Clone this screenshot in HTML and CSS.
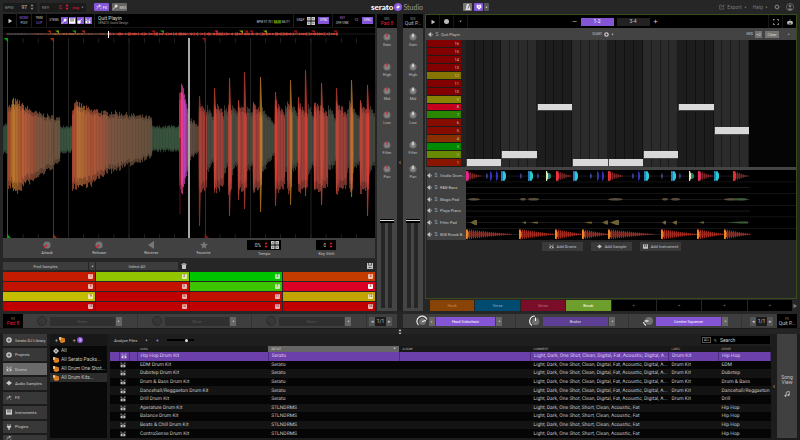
FILE: index.html
```html
<!DOCTYPE html>
<html lang="en">
<head>
<meta charset="utf-8">
<title>Serato Studio</title>
<link rel="stylesheet" href="styles.css">
</head>
<body>
<svg class="defs" aria-hidden="true">
  <symbol id="play" viewBox="0 0 8 8"><path d="M2 1l5 3-5 3z" fill="currentColor"/></symbol>
  <symbol id="back" viewBox="0 0 8 8"><path d="M7 0v8L1 4z" fill="currentColor"/></symbol>
  <symbol id="down" viewBox="0 0 8 8"><path d="M1 2h6L4 6z" fill="currentColor"/></symbol>
  <symbol id="updown" viewBox="0 0 8 8"><path d="M2 3l2-3 2 3zM2 5h4L4 8z" fill="currentColor"/></symbol>
  <symbol id="star" viewBox="0 0 10 10"><path d="M5 0l1.4 3.4 3.6.3-2.7 2.4.8 3.6L5 7.8 1.9 9.7l.8-3.6L0 3.700l3.600-.3z" fill="currentColor"/></symbol>
  <symbol id="grid" viewBox="0 0 8 8"><path d="M0 0h3.600v3.600H0zM4.400 0H8v3.600H4.400zM0 4.400h3.600V8H0zM4.400 4.400H8V8H4.400z" fill="currentColor"/><path d="M1 1.800h1.600M5.400 1.800H7M1 6.200h1.600M5.400 6.200H7" stroke="#222" stroke-width=".6"/></symbol>
  <symbol id="knob-red" viewBox="0 0 10 10"><circle cx="5" cy="5" r="4.500" fill="#707070"/><circle cx="5" cy="5" r="3" fill="#858585"/><path d="M5 .5V5" stroke="#e0102c" stroke-width="1.400"/></symbol>
  <symbol id="knob-white" viewBox="0 0 10 10"><circle cx="5" cy="5" r="4.500" fill="#6e6e6e"/><circle cx="5" cy="5" r="3" fill="#888"/><path d="M5 .5V5" stroke="#fff" stroke-width="1.400"/></symbol>
  <symbol id="knob-turn" viewBox="0 0 10 10"><circle cx="5" cy="5" r="4.500" fill="#757575"/><path d="M5 5L1.600 8" stroke="#e0102c" stroke-width="1.600"/></symbol>
  <symbol id="knob-off" viewBox="0 0 12 12"><circle cx="6" cy="6" r="4.500" fill="#383838" stroke="#2b2b2b"/><path d="M6 6L3 9" stroke="#2b2b2b"/></symbol>
  <symbol id="knob-full" viewBox="0 0 12 12"><circle cx="6.500" cy="6.500" r="3.500" fill="#707070"/><path d="M2.500 10A5.200 5.200 0 1 1 11 4.500" fill="none" stroke="#eee" stroke-width="1.200"/><path d="M6 6.500l4-1" stroke="#fff"/></symbol>
  <symbol id="knob-half" viewBox="0 0 12 12"><circle cx="6.500" cy="6.500" r="3.800" fill="#707070"/><path d="M3 10.500A5.200 5.200 0 0 1 6 1" fill="none" stroke="#eee" stroke-width="1.200"/><path d="M6.500 6V2.500" stroke="#fff"/></symbol>
  <symbol id="knob-low" viewBox="0 0 12 12"><circle cx="7" cy="6" r="4" fill="#707070"/><path d="M1.500 7q.3 2 2.500 3.500" fill="none" stroke="#eee" stroke-width="1.200"/><path d="M6.500 6H2.500" stroke="#fff" stroke-width="1.200"/></symbol>
  <symbol id="speaker" viewBox="0 0 8 8"><path d="M0 4l5-4v8zM6 1l1.500 3L6 7z" fill="currentColor"/></symbol>
  <symbol id="drums" viewBox="0 0 10 8"><path d="M1 4h8v3.600H1zM.5.300h3v.8h-3zM6.500.300h3v.8h-3z" fill="currentColor"/><path d="M2 1v3M8 1v3M3.500 1.500L5 4l1.500-2.500" stroke="currentColor" stroke-width=".8" fill="none"/><circle cx="5" cy="5.800" r="1.300" fill="#222"/></symbol>
  <symbol id="sample" viewBox="0 0 10 8"><path d="M0 4l3-2 2-2 2 2 3 2-3 2-2 2-2-2z" fill="currentColor"/></symbol>
  <symbol id="keys" viewBox="0 0 9 8"><path d="M0 0h9v8H0z" fill="currentColor"/><path d="M3 0v5M6 0v5" stroke="#333" stroke-width="1.300"/></symbol>
  <symbol id="disc" viewBox="0 0 10 10"><circle cx="5" cy="5" r="4.600" fill="currentColor"/><path d="M5 2.500v5M2.500 5h5" stroke="#333" stroke-width="1.300"/></symbol>
  <symbol id="fx" viewBox="0 0 10 8"><path d="M1 7l5-5M6 0v4M4 2h5M1 3h2M7 6h2" stroke="currentColor" fill="none"/></symbol>
  <symbol id="plug" viewBox="0 0 8 10"><path d="M2 0v3M6 0v3" stroke="currentColor"/><path d="M.5 3h7v2L5 7.500V10H3V7.500L.5 5z" fill="currentColor"/></symbol>
  <symbol id="tag" viewBox="0 0 8 8"><path d="M4 0l4 4-4 4-4-4z" fill="currentColor"/><circle cx="4" cy="4" r="1" fill="#222"/></symbol>
  <symbol id="crate" viewBox="0 0 8 8"><path d="M1 2l3-1.500L8 2v4.500L4 8 1 6.500z" fill="#e08222"/><path d="M0 0h3v4H0zM4 4l4-1.500" fill="#ffd9a0" stroke="#8a4a10" stroke-width=".5"/></symbol>
  <symbol id="crate-v" viewBox="0 0 8 8"><circle cx="4" cy="4" r="4" fill="#8456d6"/><path d="M3 2h3v4H3z" fill="#c9b3f2"/></symbol>
  <symbol id="trash" viewBox="0 0 8 9"><path d="M0 1h8v1.500H0zM1 3h6v6H1zM3 0h2v1H3z" fill="currentColor"/></symbol>
  <symbol id="save" viewBox="0 0 8 8"><path d="M0 0h8v8H0z" fill="currentColor"/><path d="M2 0v3h4V0M2 6h4" stroke="#444" fill="none"/></symbol>
  <symbol id="note" viewBox="0 0 8 8"><path d="M3 6V1.500L7 .5V5" stroke="currentColor" fill="none"/><circle cx="2" cy="6.300" r="1.400" fill="currentColor"/><circle cx="6" cy="5.300" r="1.400" fill="currentColor"/></symbol>
  <symbol id="gear" viewBox="0 0 10 10"><circle cx="5" cy="5" r="2.800" fill="none" stroke="currentColor" stroke-width="1.800"/><path d="M5 0v10M0 5h10M1.500 1.500l7 7M8.500 1.500l-7 7" stroke="currentColor" stroke-dasharray="1.500 7"/></symbol>
  <symbol id="user" viewBox="0 0 10 10"><circle cx="5" cy="5" r="4.500" fill="none" stroke="currentColor" stroke-width=".8"/><circle cx="5" cy="3.800" r="1.800" fill="currentColor"/><path d="M1.800 8q3.200-3 6.400 0Q5 10.500 1.800 8z" fill="currentColor"/></symbol>
  <symbol id="export" viewBox="0 0 10 8"><path d="M5 1H1v6.500h7V5M3.500 5q.5-3 5-3M7 .3L9 2 7 3.800" fill="none" stroke="currentColor"/></symbol>
  <symbol id="expand" viewBox="0 0 8 8"><path d="M0 2.500V.5h2.500M5.500.5H7.500v2M7.500 5.500v2h-2M2.500 7.500h-2v-2" fill="none" stroke="currentColor"/></symbol>
  <symbol id="bot" viewBox="0 0 10 9"><path d="M1 3h8v5.500H1zM4.500 0h1v3h-1zM0 5h10v2H0z" fill="currentColor"/><path d="M3 5h1M6 5h1M3 7h4" stroke="#111"/></symbol>
  <symbol id="metro" viewBox="0 0 8 8"><path d="M2.500 0h3L7.500 8h-7z" fill="currentColor"/><path d="M4 6L6 1" stroke="#555"/></symbol>
  <symbol id="magnet" viewBox="0 0 8 8"><path d="M1 1h6v3.500L4 7.500 1 4.500z" fill="currentColor"/><path d="M4 2v3" stroke="#8456d6"/></symbol>
  <symbol id="bolt" viewBox="0 0 10 10"><circle cx="5" cy="5" r="5" fill="#8a5be0"/><path d="M6.400 1.500L2.500 5.800h2.300L3.800 8.600l4-4.500H5.400z" fill="#fff"/></symbol>
  <symbol id="vox" viewBox="0 0 8 8"><path d="M1 7.500l4-4" stroke="currentColor" stroke-width="1.200"/><circle cx="5.500" cy="2.500" r="2" fill="currentColor"/></symbol>
  <symbol id="bass" viewBox="0 0 8 8"><path d="M7 1L4 4" stroke="currentColor"/><circle cx="2.800" cy="5.300" r="2.200" fill="currentColor"/></symbol>
  <symbol id="search" viewBox="0 0 8 8"><circle cx="3" cy="3" r="2.300" fill="none" stroke="currentColor"/><path d="M5 5l2.500 2.500" stroke="currentColor"/></symbol>
</svg>

<header class="top">
  <label class="field">BPM <input class="bpm" value="97"><svg class="i6"><use href="#updown"/></svg></label>
  <label class="field key">KEY <input class="red" value="D"><svg class="i6 red"><use href="#updown"/></svg><span class="red">maj</span><svg class="i4"><use href="#down"/></svg></label>
  <div class="modes">
    <button class="chip on"><svg class="i6"><use href="#fx"/></svg>FX</button>
    <button class="chip"><svg class="i6"><use href="#vox"/></svg>MIX</button>
  </div>
  <h1 class="logo"><b>serato</b><svg class="i8"><use href="#bolt"/></svg><span>Studio</span></h1>
  <div class="snap">
    <button class="sq" aria-label="Metronome"><svg class="i6"><use href="#metro"/></svg></button>
    <button class="sq on" aria-label="Snap"><svg class="i6"><use href="#magnet"/></svg></button>
    <button class="sq slim" aria-label="Snap options"><svg class="i4"><use href="#down"/></svg></button>
  </div>
  <nav class="menu">
    <button><svg class="i6"><use href="#export"/></svg>Export <svg class="i4"><use href="#down"/></svg></button>
    <button>Help <svg class="i4"><use href="#down"/></svg></button>
    <button aria-label="Settings"><svg class="i6"><use href="#gear"/></svg></button>
    <button aria-label="Account"><svg class="i8"><use href="#user"/></svg></button>
  </nav>
</header>

<main class="work">
  <section class="deck">
    <div class="deckbar">
      <button class="cell play" aria-label="Play"><svg class="i6"><use href="#play"/></svg></button>
      <div class="cell two"><button class="vio">MONO</button><button>POLY</button></div>
      <div class="cell two"><button>TRIM</button><button class="vio">SLIP</button></div>
      <div class="cell stems"><span>STEMS</span>
        <button aria-label="Vocals"><svg class="i6"><use href="#vox"/></svg></button>
        <button aria-label="Melody"><svg class="i6"><use href="#keys"/></svg></button>
        <button aria-label="Bass"><svg class="i6"><use href="#bass"/></svg></button>
        <button aria-label="Drums"><svg class="i6"><use href="#drums"/></svg></button>
      </div>
      <div class="title"><strong>Quit Playin</strong><small>SERATO Sound Design</small></div>
      <div class="meta">BPM 97.701 <em>84.00</em> 86/71</div>
      <div class="cell sync"><span>SNAP</span><svg class="i8"><use href="#grid"/></svg><button class="vbtn">SYNC</button></div>
      <div class="cell sync last"><div class="two"><button class="vio">KEY</button><button>OFF/UNK</button></div><span>-12</span><button class="vbtn">SYNC</button></div>
    </div>
    <svg id="overview" class="overview" viewBox="0 0 372 10" preserveAspectRatio="none" role="img" aria-label="Song overview"></svg>
    <svg id="wave" class="wave" viewBox="0 0 372 200" preserveAspectRatio="none" role="img" aria-label="Waveform"></svg>
    <div class="controls">
      <label class="ctl knob"><svg class="i8"><use href="#knob-turn"/></svg><input type="range" min="0" max="100" value="0">Attack</label>
      <label class="ctl knob"><svg class="i8"><use href="#knob-turn"/></svg><input type="range" min="0" max="100" value="0">Release</label>
      <button class="ctl"><svg class="i8 mute"><use href="#back"/></svg>Reverse</button>
      <button class="ctl"><svg class="i8 mute"><use href="#star"/></svg>Favorite</button>
      <label class="ctl"><span class="num wide"><input value="0%"><svg class="i6 red"><use href="#updown"/></svg><svg class="i8"><use href="#grid"/></svg></span>Tempo</label>
      <label class="ctl"><span class="num"><input value="0"><svg class="i6 red"><use href="#updown"/></svg></span>Key Shift</label>
    </div>
    <div class="finder">
      <div class="split"><button class="bar">Find Samples</button><button class="bar arrow" aria-label="Find options"><svg class="i4"><use href="#down"/></svg></button></div>
      <div class="split"><button class="bar">Select All</button><button class="ico" aria-label="Delete"><svg class="i6"><use href="#trash"/></svg></button></div>
      <button class="ico save" aria-label="Save"><svg class="i6"><use href="#save"/></svg></button>
    </div>
    <div id="pads" class="pads"></div>
  </section>

  <section class="channel" data-name="Pad 8" data-knob="red"></section>
  <button class="spine" aria-label="Collapse mixer">‹</button>
  <section class="channel" data-name="Quit P..." data-knob="white"></section>

  <section class="right">
    <div class="editor">
      <div class="edbar">
        <button class="p" aria-label="Play"><svg class="i6"><use href="#play"/></svg></button>
        <button class="p" aria-label="Record"><i class="dot"></i></button>
        <button class="p" aria-label="Record options"><svg class="i4"><use href="#down"/></svg></button>
        <div class="tabs"><button class="pm">–</button><button class="tab on">1-2</button><button class="tab">3-4</button><button class="pm">+</button></div>
        <button class="p end" aria-label="Expand"><svg class="i6"><use href="#expand"/></svg></button>
        <button class="p end" aria-label="Assistant"><svg class="i6"><use href="#bot"/></svg></button>
      </div>
      <div class="edhead">
        <svg class="i5"><use href="#speaker"/></svg><span class="s">S</span><span>Quit Playin</span>
        <span class="mid"><small>QUANT</small><svg class="i5"><use href="#disc"/></svg><svg class="i4"><use href="#down"/></svg></span>
        <small>GRID</small><button class="mini">÷2</button><button class="mini clear">Clear</button><button class="mini flat">^</button>
      </div>
      <div class="roll">
        <div id="keys-list" class="keyscol"></div>
        <div id="notes" class="notes"></div>
        <div class="void"></div>
      </div>
      <div class="sill"></div>
      <div class="tracks">
        <div id="names" class="names"></div>
        <svg id="lanes" class="lanes" viewBox="0 0 330 70" preserveAspectRatio="none" role="img" aria-label="Track clips"></svg>
      </div>
      <div class="adds">
        <button><svg class="i5"><use href="#drums"/></svg>Add Drums</button>
        <button><svg class="i5"><use href="#sample"/></svg>Add Sample</button>
        <button><svg class="i5"><use href="#keys"/></svg>Add Instrument</button>
      </div>
    </div>
    <div class="scenes">
      <button class="hook">Hook</button><button class="blue">Verse</button><button class="wine">Verse</button><button class="green">Break</button>
      <button>+</button><button>+</button><button>+</button><button>+</button>
      <button class="next" aria-label="More scenes"><svg class="i6"><use href="#play"/></svg></button>
    </div>
  </section>
</main>

<section class="fxrow">
  <div class="rack">
    <div class="tagbox"><small>FX</small><b class="red">Pad 8</b></div>
    <div class="slot off"><label class="knob"><svg class="i10"><use href="#knob-off"/></svg><input type="range" aria-label="FX 1 amount"></label><button class="name">None</button><button class="dd" aria-label="Choose FX 1"><svg class="i4"><use href="#down"/></svg></button></div>
    <div class="slot off"><label class="knob"><svg class="i10"><use href="#knob-off"/></svg><input type="range" aria-label="FX 2 amount"></label><button class="name">None</button><button class="dd" aria-label="Choose FX 2"><svg class="i4"><use href="#down"/></svg></button></div>
    <div class="slot off"><label class="knob"><svg class="i10"><use href="#knob-off"/></svg><input type="range" aria-label="FX 3 amount"></label><button class="name">None</button><button class="dd" aria-label="Choose FX 3"><svg class="i4"><use href="#down"/></svg></button></div>
    <div class="pager"><button>◂</button><span>1/1</span><button>▸</button></div>
  </div>
  <div class="rack">
    <div class="slot"><label class="knob"><svg class="i10"><use href="#knob-full"/></svg><input type="range" aria-label="Sidechain amount"></label><button class="dd">◐</button><button class="name vivid">Hard Sidechain</button><button class="dd" aria-label="Choose FX"><svg class="i4"><use href="#down"/></svg></button></div>
    <div class="slot"><label class="knob"><svg class="i10"><use href="#knob-half"/></svg><input type="range" aria-label="Braker amount"></label><button class="name dim">Braker</button><button class="dd" aria-label="Choose FX"><svg class="i4"><use href="#down"/></svg></button></div>
    <div class="slot"><label class="knob"><svg class="i10"><use href="#knob-low"/></svg><input type="range" aria-label="Limiter amount"></label><button class="name vivid">Limiter Squeeze</button><button class="dd" aria-label="Choose FX"><svg class="i4"><use href="#down"/></svg></button></div>
    <div class="pager"><button>◂</button><span>1/1</span><button>▸</button></div>
    <div class="tagbox"><small>FX</small><b>Quit P...</b></div>
  </div>
</section>
<div class="handle"><svg class="i6"><use href="#updown"/></svg></div>

<section class="library">
  <nav class="side">
    <button><svg class="i6"><use href="#disc"/></svg>Serato DJ Library</button>
    <button><svg class="i6"><use href="#disc"/></svg>Projects</button>
    <button class="sel"><svg class="i6"><use href="#drums"/></svg>Drums</button>
    <button><svg class="i6"><use href="#sample"/></svg>Audio Samples</button>
    <button><svg class="i6"><use href="#fx"/></svg>FX</button>
    <button><svg class="i6"><use href="#keys"/></svg>Instruments</button>
    <button><svg class="i6"><use href="#plug"/></svg>Plugins</button>
    <button aria-label="More"><svg class="i6"><use href="#fx"/></svg></button>
  </nav>
  <div class="tree">
    <div class="treebar"><button>+<svg class="i6"><use href="#crate"/></svg></button><button>+<svg class="i6"><use href="#crate-v"/></svg></button></div>
    <ul>
      <li><svg class="i6"><use href="#tag"/></svg>All</li>
      <li><svg class="i6"><use href="#crate"/></svg>All Serato Packs...</li>
      <li><svg class="i6"><use href="#crate"/></svg>All Drum One Shot...</li>
      <li class="sel"><svg class="i6"><use href="#crate"/></svg>All Drum Kits...</li>
    </ul>
  </div>
  <div class="files">
    <div class="filebar">
      <button>Analyze Files</button><svg class="i4"><use href="#down"/></svg><svg class="i4 vio"><use href="#speaker"/></svg>
      <input class="vol" type="range" aria-label="Preview volume" value="75">
      <label class="find"><span class="pill">ALL</span><svg class="i4"><use href="#search"/></svg><input placeholder="Search" aria-label="Search"></label>
    </div>
    <table>
      <colgroup><col class="c1"><col class="c2"><col class="c3"><col><col><col><col class="c4"><col class="c5"><col class="c6"></colgroup>
      <thead><tr><th></th><th></th><th></th><th>SONG</th><th class="sorted">ARTIST<svg class="i4"><use href="#down"/></svg></th><th>ALBUM</th><th>COMMENT</th><th>LABEL</th><th>GENRE</th></tr></thead>
      <tbody id="rows"></tbody>
    </table>
  </div>
  <button class="fold" aria-label="Collapse">‹</button>
  <button class="song"><span>Song View</span><svg class="i6"><use href="#note"/></svg></button>
</section>
<script src="app.js"></script>
</body>
</html>
```
FILE: styles.css
```css
* { box-sizing: border-box; }
body {
  margin: 0;
  min-height: 100vh;
  display: flex;
  flex-direction: column;
  background: #262626;
  color: #c4c4c4;
  font: 4px/5px Roboto, "Liberation Sans", sans-serif;
}
button, input { font: inherit; color: inherit; background: none; border: 0; padding: 0; margin: 0; min-width: 0; outline: 0; }
button { display: flex; align-items: center; justify-content: center; }
svg { display: block; flex: none; }
small { font-size: 3px; }
.defs { position: absolute; width: 0; height: 0; }
.i4 { width: 3px; height: 3px; }
.i5 { width: 5px; height: 5px; }
.i6 { width: 6px; height: 6px; }
.i8 { width: 8px; height: 8px; }
.i10 { width: 12px; height: 12px; }
.red { color: #f01830; }
.vio { color: #9568ee; }
.mute { color: #777; }

.top { display: flex; column-gap: 3px; align-items: center; height: 14px; padding: 0 3px; }
.field { display: flex; align-items: center; gap: 2px; width: 34px; height: 9px; padding: 0 2px; background: #1b1b1b; color: #888; }
.field.key { width: 46px; }
.field input { width: 8px; flex: 1; text-align: right; font-size: 5px; color: #ccc; }
.field input.red { color: #f01830; }
.modes { display: flex; gap: 3px; margin-left: 5px; }
.chip { gap: 1px; width: 15px; height: 8px; background: #666; color: #ddd; border-radius: 1px; }
.chip.on, .sq.on { background: #8456d6; color: #fff; }
.logo { display: flex; align-items: center; gap: 1px; margin: 0 37px 0 241px; font: 400 7px/10px Lato, sans-serif; color: #999; }
.logo b { font-weight: 900; color: #fff; font-size: 8px; }
.snap { display: flex; gap: 2px; }
.sq { width: 9px; height: 8px; background: #777; color: #ddd; border-radius: 1px; }
.sq.slim { width: 5px; background: #555; margin-left: -1px; }
.menu { display: flex; gap: 6px; margin-left: auto; padding-right: 3px; color: #777; font-size: 5px; }
.menu button { gap: 2px; }

.work { display: grid; grid-template-columns: minmax(0, 1fr) 20px 6px 20px minmax(0, 1fr); padding: 0 3px; }
.deck { display: flex; flex-direction: column; min-width: 0; margin-right: 2px; }
.deckbar { display: flex; height: 14px; background: #000; color: #ccc; font-size: 3px; line-height: 5px; border-bottom: 1px solid #161616; }
.cell { display: flex; flex: none; align-items: center; justify-content: center; gap: 1px; border-right: 1px solid #1c1c1c; }
.play { width: 14px; }
.two { display: flex; flex-direction: column; align-items: center; justify-content: center; width: 15px; gap: 0; }
.stems { width: 48px; gap: 1px; }
.stems span { margin-right: 1px; }
.stems button { width: 7px; height: 7px; background: #8456d6; color: #fff; }
.title { padding: 2px 3px; display: flex; flex-direction: column; white-space: nowrap; }
.title strong { font-size: 5px; font-weight: 400; color: #ddd; }
.title small { color: #999; line-height: 4px; }
.meta { margin-left: auto; align-self: flex-end; padding: 0 3px 2px 0; white-space: nowrap; }
.meta em { color: #a3e000; font-style: normal; background: #1c3000; }
.sync { width: 40px; gap: 3px; border-left: 1px solid #1c1c1c; }
.sync.last { width: 42px; gap: 4px; border: 0; }
.vbtn { width: 11px; height: 7px; background: #8456d6; color: #fff; }
.overview { width: 100%; height: 10px; background: #000; }
.wave { width: 100%; height: 200px; background: #000; }
.controls { display: grid; grid-template-columns: repeat(4, 52fr) 69fr 55fr; height: 20px; padding: 0 21px 0 18px; background: #414141; }
.ctl { display: flex; flex-direction: column; align-items: center; justify-content: center; gap: 1px; position: relative; }
.knob { position: relative; }
.knob input { position: absolute; inset: 0; width: 100%; height: 100%; opacity: 0; }
.num { display: flex; align-items: center; justify-content: flex-end; gap: 2px; width: 20px; height: 10px; padding: 0 2px; background: #000; }
.num.wide { width: 34px; }
.num input { width: 8px; flex: 1; text-align: right; font-size: 5px; }
.finder { display: grid; grid-template-columns: repeat(4, 1fr); gap: 1px; height: 8px; margin: 4px 0 2px; }
.split { display: flex; gap: 1px; }
.bar { flex: 1; background: #3d3d3d; height: 8px; }
.bar.arrow { flex: 0 0 6px; }
.ico { width: 10px; height: 8px; }
.ico.save { grid-column: 4; justify-self: end; }
.pads { display: grid; grid-template-columns: repeat(4, 1fr); grid-auto-rows: 9px; gap: 1px; }
.pads button { justify-content: flex-end; padding-right: 2px; }
.pads i { width: 5px; height: 5px; border-radius: 1px; background: rgba(255, 255, 255, .7); color: #a33; font: 700 3px/5px Roboto, sans-serif; text-align: center; }
.pads .hot i { background: #fff; }

.channel { display: flex; flex-direction: column; align-items: center; background: #454545; color: #bbb; }
.tagbox { display: flex; flex-direction: column; align-items: center; justify-content: center; width: 20px; height: 14px; background: #000; white-space: nowrap; }
.tagbox small { color: #888; line-height: 4px; }
.tagbox b { font-size: 5px; font-weight: 400; }
.channel .tagbox { margin-bottom: 5px; }
.channel .knob { display: flex; flex-direction: column; align-items: center; height: 24px; gap: 1px; }
.channel .knob:nth-of-type(1), .channel .knob:nth-of-type(4) { height: 30px; }
.fader { position: relative; width: 14px; flex: 1; margin: 30px 0 3px; background: linear-gradient(90deg, transparent 1px, #262626 1px 5px, transparent 5px 8px, #262626 8px 12px, transparent 12px); }
.fader input { position: absolute; inset: 0; appearance: none; writing-mode: vertical-lr; direction: rtl; width: 14px; height: 100%; }
.fader input::-webkit-slider-thumb { appearance: none; width: 14px; height: 4px; background: linear-gradient(#000 1px, #ddd 1px 2px, #000 2px); }
.spine { color: #aaa; background: #1f1f1f; font-size: 8px; }

.right { display: flex; flex-direction: column; min-width: 0; margin-left: 2px; }
.editor { display: flex; flex-direction: column; flex: 1; border: 1px solid #3a4c1c; padding-left: 1px; }
.edbar { display: flex; align-items: stretch; height: 13px; background: #000; margin-left: -1px; }
.p { width: 14px; border-right: 1px solid #161616; }
.p.end { border: 0; border-left: 1px solid #161616; }
.dot { width: 5px; height: 5px; border-radius: 50%; background: #bbb; }
.tabs { display: flex; flex: 1; align-items: center; justify-content: center; gap: 3px; padding-right: 6px; font-size: 5px; }
.tab { width: 33px; height: 8px; background: #222; }
.tab.on { background: #8456d6; color: #fff; }
.pm { width: 6px; font-size: 8px; }
.edhead { display: flex; align-items: center; gap: 2px; height: 12px; padding: 0 4px 0 2px; margin-left: -1px; background: #434343; }
.s { width: 4px; font-size: 5px; color: #aaa; text-align: center; }
.mid { display: flex; align-items: center; gap: 2px; margin: 0 auto; }
.mini { height: 7px; background: #737373; color: #ddd; width: 7px; }
.mini.clear { width: 14px; margin-left: 1px; }
.mini.flat { background: none; margin-left: 4px; }
.roll { display: grid; grid-template-columns: 34px 284fr 46fr; height: 127px; background: #222; }
.keyscol { display: grid; grid-template-rows: repeat(16, 1fr); }
.keyscol button { justify-content: flex-end; padding-right: 2px; border-bottom: 1px solid #1c1c1c; }
.notes { display: grid; grid-template: repeat(16, 1fr) / repeat(8, 1fr); margin-left: 5px; background: repeating-linear-gradient(90deg, transparent 0 calc(3.125% - 1px), rgba(0, 0, 0, .4) calc(3.125% - 1px) 3.125%), repeating-linear-gradient(90deg, #1d1d1d 0 12.5%, #2b2b2b 12.5% 25%); }
.notes i { background: #d9d9d9; border: solid #444; border-width: 0 0 1px 1px; }
.void { background: #050505; }
.sill { height: 3px; background: #444; margin-left: -1px; }
.tracks { display: grid; grid-template-columns: 39px 1fr; height: 70px; }
.names { display: grid; grid-template-rows: repeat(6, 1fr); background: #414141; }
.names div { display: flex; align-items: center; gap: 2px; white-space: nowrap; }
.lanes { width: 100%; height: 70px; background: #000; }
.adds { display: flex; justify-content: center; gap: 8px; padding-top: 2px; }
.adds button { width: 41px; height: 9px; gap: 3px; background: #3a3a3a; white-space: nowrap; }
.scenes { display: grid; grid-template-columns: repeat(8, 1fr) 4px; gap: 1px; height: 12px; padding: 1px 0 0 5px; }
.scenes button { background: #000; color: #777; }
.scenes .hook { background: #884406; color: #c98a50; }
.scenes .blue { background: #014a70; color: #7fb3cc; }
.scenes .wine { background: #7a0d28; color: #c9707f; }
.scenes .green { background: #6e9e2c; color: #fff; }
.scenes .next { background: none; }

.fxrow { display: grid; grid-template-columns: 1fr 1fr; gap: 6px; padding: 3px 3px 0; }
.rack { display: flex; height: 14px; background: #3e3e3e; min-width: 0; }
.rack:first-child { padding-right: 3px; }
.slot { display: flex; flex: 1; align-items: center; gap: 1px; padding: 0 13px; border-right: 1px solid #333; }
.slot.off { padding: 0 15px 0 13px; }
.name { flex: 1; height: 9px; background: #303030; color: #555; white-space: nowrap; }
.vivid { background: #8456d6; color: #fff; }
.dim { background: #5d4096; color: #ddd; }
.knob + .name { margin-left: 1px; }
.dd { width: 6px; height: 9px; background: #666; color: #ccc; }
.pager { display: flex; align-items: center; padding: 0 2px; font-size: 5px; }
.pager button { width: 6px; height: 9px; background: #555; }
.pager span { width: 11px; height: 9px; line-height: 9px; text-align: center; background: #1b1b1b; }
.rack:last-child .pager { padding: 0 4px 0 8px; }
.handle { display: flex; justify-content: center; align-items: center; height: 6px; background: #242424; border-top: 1px solid #1b1b1b; }

.library { display: grid; grid-template-columns: 44px 63px minmax(0, 1fr) 6px 20px; flex: 1; min-height: 106px; padding: 0 3px; background: #1c1c1c; }
.side { display: grid; grid-template-rows: repeat(7, 1fr) 5px; gap: 2px; overflow: hidden; }
.side button { justify-content: flex-start; gap: 3px; padding-left: 3px; background: #383838; color: #ccc; white-space: nowrap; overflow: hidden; }
.side .sel { background: #6a6a6a; }
.tree { margin: 0 3px 2px; background: #080808; font-size: 5px; white-space: nowrap; overflow: hidden; }
.treebar { display: flex; gap: 8px; height: 12px; padding-left: 5px; background: #181818; }
.treebar button { gap: 1px; }
.tree ul { list-style: none; margin: 0; padding: 0; }
.tree li { display: flex; align-items: center; gap: 2px; height: 9px; padding-left: 3px; }
.tree .sel { background: #2c2c2c; }
.files { display: flex; flex-direction: column; padding-bottom: 2px; min-width: 0; }
.filebar { display: flex; align-items: center; gap: 8px; height: 12px; padding: 0 1px 0 4px; background: #1e1e1e; }
.vol { appearance: none; width: 27px; height: 2px; background: #000; }
.vol::-webkit-slider-thumb { appearance: none; width: 3px; height: 3px; border-radius: 50%; background: #ddd; }
.find { display: flex; align-items: center; gap: 3px; width: 69px; height: 8px; padding-left: 1px; margin-left: auto; background: #000; }
.find input { width: 40px; font-size: 5px; }
.find input::placeholder { color: #ccc; }
.pill { border: 1px solid #555; width: 9px; height: 6px; font-size: 3px; line-height: 4px; text-align: center; }
table { width: 100%; flex: 1; border-collapse: collapse; table-layout: fixed; background: #050505; font-size: 5px; line-height: 6px; text-rendering: geometricPrecision; }
.c1 { width: 9px; } .c2 { width: 10px; } .c3 { width: 8px; }
.c4 { width: 138px; } .c5 { width: 50px; } .c6 { width: 52px; }
th { height: 6px; padding: 0 0 0 3px; font-size: 3px; line-height: 6px; font-weight: 400; text-align: left; background: #181818; color: #aaa; }
th.sorted { background: #666; color: #ddd; }
th.sorted svg { float: right; margin: 1px 3px; }
td { padding: 0 0 0 3px; overflow: hidden; white-space: nowrap; }
td:nth-child(2) { padding: 0 1px; }
tbody tr:nth-child(odd) { background: #131313; }
tbody tr:first-child { background: #6b40aa; color: #d9cbf2; }
tbody tr:first-child td { border-right: 1px solid #4b2c80; }
.fold { color: #bbb; font-size: 7px; }
.song { flex-direction: column; gap: 6px; background: #404040; margin-bottom: 2px; font-size: 5px; }
.song span { width: 14px; }
```
FILE: app.js
```js
const el = id => document.getElementById(id);
let seed = 7;
const rnd = () => (seed = (seed * 16807) % 2147483647) / 2147483647;

// Pads and the keys that mirror them
const pads = ['#c41c00', '#92c400', '#00c400', '#c43c00', '#c41200', '#c41200', '#3cc400', '#dc0024',
  '#c4bc00', '#c00000', '#c01000', '#c4a400', '#c00000', '#c00000', '#c00000', '#c00000'];
const keys = ['#8a1500', '#688a00', '#008a00', '#8a3000', '#860c00', '#860c00', '#2a8600', '#c4001e',
  '#868400', '#820000', '#820000', '#867400', '#820000', '#820000', '#820000', '#820000'];
el('pads').innerHTML = pads.map((c, i) =>
  `<button class="${i === 7 ? 'hot' : ''}" style="background:${c}"><i>${i + 1}</i></button>`).join('');
el('keys-list').innerHTML = keys.map((c, i) =>
  `<button style="background:${c}">${i + 1}</button>`).reverse().join('');

// Notes: [block, row from the top]
el('notes').innerHTML = [[1, 16], [2, 15], [3, 9], [4, 16], [5, 16], [6, 15], [7, 9], [8, 12]]
  .map(([c, r]) => `<i style="grid-area:${r}/${c}"></i>`).join('');

el('names').innerHTML = ['Studio Drum...', 'R&amp;B Bass', 'Magic Pad', 'Playa Piano', 'Filter Pad', '808 Knock B...']
  .map(n => `<div><svg class="i5"><use href="#speaker"/></svg><span class="s">S</span>${n}</div>`).join('');

document.querySelectorAll('.channel').forEach(ch => {
  const { name, knob } = ch.dataset;
  ch.innerHTML = `<div class="tagbox"><small>MIX</small><b class="${knob}">${name}</b></div>` +
    ['Gain', 'High', 'Mid', 'Low', 'Filter', 'Pan'].map(l =>
      `<label class="knob"><svg class="i8"><use href="#knob-${knob}"/></svg><input type="range">${l}</label>`).join('') +
    `<div class="fader"><input type="range" aria-label="${name} level" min="0" max="100" value="100"></div>`;
});

const a = 'Light, Dark, One Shot, Clean, Digital, Fat, Acoustic, Digital, A...';
const b = 'Light, Dark, One Shot, Short, Clean, Acoustic, Fat';
el('rows').innerHTML = [
  ['Hip Hop Drum Kit', 'Serato', a, 'Drum Kit', 'Hip Hop'],
  ['EDM Drum Kit', 'Serato', a, 'Drum Kit', 'EDM'],
  ['Dubstep Drum Kit', 'Serato', a, 'Drum Kit', 'Dubstep'],
  ['Drum &amp; Bass Drum Kit', 'Serato', a, 'Drum Kit', 'Drum &amp; Bass'],
  ['Dancehall/Reggaeton Drum Kit', 'Serato', a, 'Drum Kit', 'Dancehall/Reggaeton'],
  ['Drill Drum Kit', 'Serato', a, 'Drum Kit', 'Drill'],
  ['Aperature Drum Kit', 'STLNDRMS', b, '', 'Hip Hop'],
  ['Balance Drum Kit', 'STLNDRMS', b, '', 'Hip Hop'],
  ['Beats &amp; Chill Drum Kit', 'STLNDRMS', b, '', 'Hip Hop'],
  ['ControSense Drum Kit', 'STLNDRMS', b, '', 'Hip Hop']
].map(([s, ar, c, l, g]) => `<tr><td></td><td><svg class="i6"><use href="#drums"/></svg></td><td></td><td>${s}</td><td>${ar}</td><td></td><td>${c}</td><td>${l}</td><td>${g}</td></tr>`).join('');

// Main waveform
const bar = (x, t, h, c, o = 1, w = 1) => `<rect x="${x}" y="${t}" width="${w}" height="${h}" fill="${c}" opacity="${o}"/>`;
const mid = 100;
const mix = (p, q, k) => {
  const f = s => [1, 3, 5].map(i => parseInt(s.substr(i, 2), 16));
  const u = f(p), v = f(q);
  return `rgb(${u.map((n, i) => Math.round(n + (v[i] - n) * k)).join()})`;
};
// Segments: x0, x1, top0, top1, bottom0, bottom1, colour0, colour1
const segs = [
  [0, 5, 14, 14, 15, 15, '#33503a', '#33503a'],
  [5, 9, 30, 33, 50, 48, '#a8502c', '#b86c30'],
  [9, 19, 37, 34, 50, 55, '#c88032', '#a8552e'],
  [19, 32, 32, 25, 46, 42, '#c46440', '#96503a'],
  [32, 57, 25, 19, 40, 24, '#8a5840', '#6c5844'],
  [57, 69, 12, 12, 14, 14, '#3c5440', '#3a5842'],
  [69, 74, 30, 35, 50, 48, '#b85036', '#b45c34'],
  [74, 90, 34, 26, 48, 46, '#c07838', '#a85038'],
  [90, 106, 28, 24, 44, 32, '#b85a3c', '#8a5840'],
  [106, 149, 26, 20, 34, 18, '#805844', '#6a5440'],
  [149, 176, 11, 12, 13, 13, '#3c5440', '#3a5a40'],
  [176, 178, 42, 42, 50, 60, '#e8205c', '#f0305c'],
  [178, 181, 52, 44, 56, 52, '#f04090', '#c848b8'],
  [181, 185, 40, 24, 46, 26, '#c048c0', '#983880'],
  [185, 196, 20, 12, 22, 14, '#6c5044', '#54483c'],
  [196, 372, 20, 18, 20, 18, '#4c4c42', '#484a40']
];
const bursts = [[196, 204], [211, 221], [225, 229], [235, 244], [250, 259], [272, 282], [284, 289], [295, 305], [311, 325], [333, 344], [346, 350], [357, 366]];
const spikes = [[196, 42, 88, '#b0402c'], [211, 50, 52, '#d04a38'], [226, 60, 78, '#d04838'], [235, 38, 62, '#c04838'],
  [241, 66, 71, '#d04438'], [250, 36, 52, '#c04838'], [257, 61, 74, '#c8882c'], [272, 46, 68, '#f03828'], [287, 58, 67, '#c0802c'],
  [295, 41, 46, '#d04838'], [302, 68, 58, '#e03c30'], [311, 35, 50, '#d04838'], [318, 55, 67, '#d05038'], [333, 50, 56, '#c84838'],
  [348, 58, 59, '#c8802c'], [357, 38, 44, '#c04838'], [364, 53, 78, '#f03c30']];
let out = '';
for (let x = 12; x < 372; x += 15.15) out += bar(x - 7.400, 0, 5, '#333', 1, .6) + bar(x - 7.400, 196, 4, '#333', 1, .6);
[65, 125.5, 247, 307.5].forEach(x => out += bar(x, 0, 200, '#222'));
segs.forEach(([x0, x1, t0, t1, b0, b1, c0, c1]) => {
  for (let x = x0; x < x1; x++) {
    const k = (x - x0) / (x1 - x0);
    let t = t0 + (t1 - t0) * k, bt = b0 + (b1 - b0) * k, c = mix(c0, c1, k);
    const hit = bursts.find(([s, e]) => x >= s && x < e);
    if (hit) {
      const d = (x - hit[0]) / (hit[1] - hit[0]);
      t = 35 - d * 12; bt = 54 - d * 6;
      c = ['#b0443c', '#943c38', '#a04a40'][x % 3];
    } else if (x > 196) { const n = bursts.filter(q => q[1] <= x).pop(); const g = Math.max(0, 12 - (x - n[1])); t = 13 + g * 1.500; bt = 16 + g * 1.500; }
    const j = Math.max(3, t * .22);
    t += (rnd() - .5) * j; bt += (rnd() - .5) * j;
    out += bar(x, mid - t, t + bt, c, .7, 1.100);
    out += bar(x, mid - t * .85, (t + bt) * .85, c, x % 3 ? .8 : .55, 1.100);
  }
});
spikes.forEach(([x, t, bt, c]) => {
  out += `<path d="M${x} ${mid - t}h1L${x + 2.500} ${mid - 18}V${mid + 20}L${x + 1} ${mid + bt}h-1L${x - .5} ${mid + 20}V${mid - 18}z" fill="${c}" opacity=".75"/>`;
});
out += bar(176.5, mid, 76, '#6c1020', .9, 1);
[[4, '#00a010', .8], [50, '#9c2c10', .8], [202, '#8c0c0c', .9]].forEach(([x, c, o]) => {
  out += bar(x, 0, 200, c, o, 1) + `<path d="M${x + .8} 0h-4l4 4zM${x} 200v-4l4 4z" fill="${c}"/>`;
});
out += bar(185, 0, 200, '#a8a8a8', 1, 2);
el('wave').innerHTML = out;

// Overview
out = bar(3, 5.500, 1, '#5c1c18', 1, 330) + bar(0, 5.500, 1, '#333', .5, 372);
for (let x = 4; x < 335; x++) {
  const h = x < 105 ? 1 + rnd() : 1.500 + rnd() * 1.500;
  const c = x < 30 ? '#444' : x < 50 ? '#6a4436' : x < 80 ? '#a8603c' : x < 105 ? '#6a4436' : rnd() > .3 ? '#b84038' : '#70302c';
  out += bar(x, 6 - h / 2, h, c);
}
[[44, '#a02010'], [52, '#78a000'], [69, '#00a010'], [78, '#a03010'], [148, '#a01010'], [157, '#00a010'], [211, '#e01038'],
  [236, '#90a000'], [241, '#a01010'], [246, '#a01010'], [260, '#90a000'], [290, '#a01010'], [308, '#a01010'], [330, '#a01010']]
  .forEach(([x, c]) => { out += `<path d="M${x} 2.500h4v3z" fill="${c}"/>`; });
el('overview').innerHTML = out + bar(105, 3, 7, '#fff');

// Track lanes
out = '';
for (let i = 0; i < 6; i++) {
  out += bar(0, i * 11.667 + 5.800, .5, '#333', 1, 284) + (i ? bar(0, i * 11.667, .5, '#262626', 1, 330) : '');
}
const tail = (x, y, len, h, c) => {
  let s = '';
  for (let k = 0; k < len; k++) {
    const g = h * Math.pow(1 - k / len, 1.200) * (k % 2 ? .7 : 1.100) + .3;
    s += bar(x + k, y - g, g * 2, c, k % 2 ? .6 : .9);
  }
  return s;
};
const hit = (x, y, h, w, c) => `<path d="M${x} ${y - h}h${w * .5}L${x + w} ${y - h * .4}v${h * .8}L${x + w * .5} ${y + h}H${x}z" fill="${c}"/>`;
[[0, '#e02890'], [90, '#e83040'], [142, '#e03030'], [232, '#e03060'], [267, '#e03030']].forEach(([x, c]) => { out += tail(x + 2, 6, 13, 4, '#802828') + hit(x, 6, 5, 3, c); });
[20, 54, 71, 124, 166, 195, 213].forEach(x => { out += hit(x, 6, 2.500, 2, '#383890'); });
[24, 30, 131, 136, 172].forEach(x => { out += hit(x, 6, 4.500, 2, '#3434b8'); });
[36, 63, 108, 179, 206, 249].forEach(x => { out += hit(x - 1, 6, 5, 3, '#2880b8') + hit(x + 1, 6, 4.800, 3, '#30c8d0'); });
[80, 223].forEach(x => { out += hit(x, 6, 5, 2, '#e0f0b0') + hit(x + 2, 6, 3, 3, '#288070'); });
const lens = (x, y, w, h, c) => `<ellipse cx="${x + w / 2}" cy="${y}" rx="${w / 2}" ry="${h}" fill="${c}"/>`;
[[2, 12], [54, 6], [62, 11], [142, 15], [196, 6], [205, 9], [258, 14]].forEach(([x, w]) => { out += lens(x, 29.300, w, 1.300, '#5c4e3c'); });
out += lens(268, 29.300, 14, 1.300, '#405c3c');
[[4, 7, 2.500], [56, 4, 1.200], [64, 8, .8], [118, 8, .8], [136, 6, 2], [144, 9, 2.500], [196, 4, 1.800], [206, 5, 1.800], [233, 5, 1], [260, 22, 1]]
  .forEach(([x, w, h]) => { out += `<path d="M${x} 52.600L${x + w * .7} ${52.6 - h}h${w * .3}v${2 * h}h-${w * .3}z" fill="${x > 250 ? '#3c5c3c' : '#6c6234'}"/>`; });
const bd = [0, 53, 89, 116, 142, 195, 231, 258, 284];
bd.slice(0, 8).forEach((x, i) => { out += tail(x + 1, 64.300, Math.min(bd[i + 1] - x, 45), 4.300, '#b03024') + hit(x, 64.300, 4.800, 2.500, '#f08828'); });
el('lanes').innerHTML = out;
```
